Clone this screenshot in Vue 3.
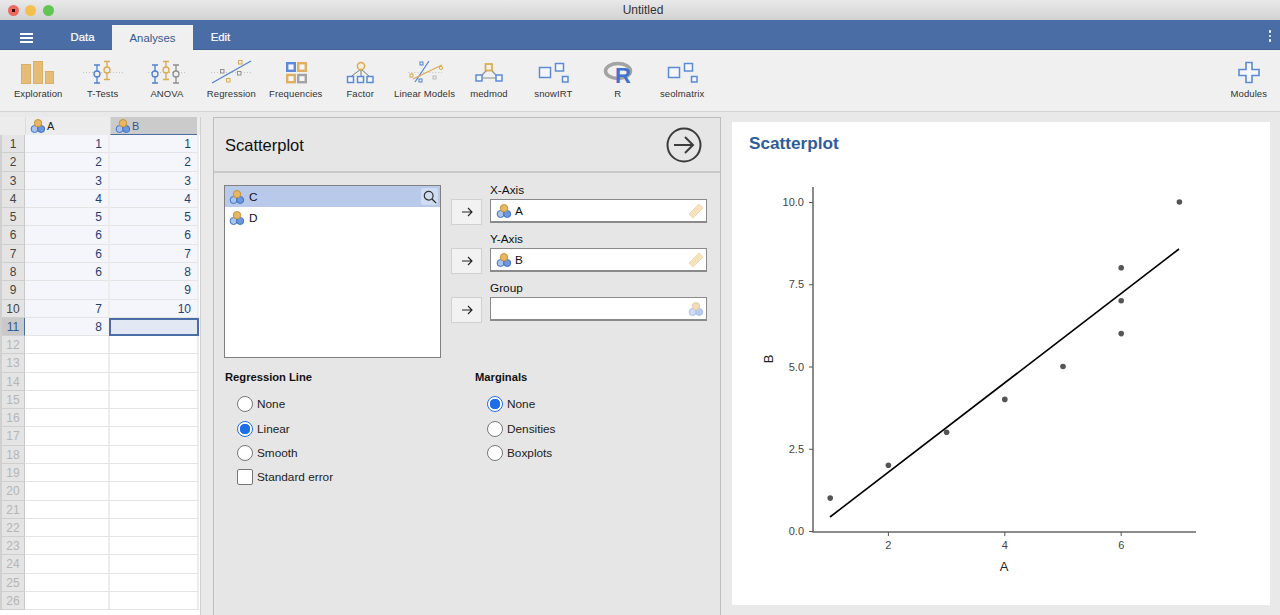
<script setup>
const tools = [
  { label: 'Exploration', icon: 'explore' },
  { label: 'T-Tests', icon: 'ttest' },
  { label: 'ANOVA', icon: 'anova' },
  { label: 'Regression', icon: 'regress' },
  { label: 'Frequencies', icon: 'freq' },
  { label: 'Factor', icon: 'factor' },
  { label: 'Linear Models', icon: 'linear' },
  { label: 'medmod', icon: 'medmod' },
  { label: 'snowIRT', icon: 'boxes' },
  { label: 'R', icon: 'r' },
  { label: 'seolmatrix', icon: 'boxes' },
]

const colA = [1, 2, 3, 4, 5, 6, 6, 6, '', 7, 8]
const colB = [1, 2, 3, 4, 5, 6, 7, 8, 9, 10, '']
// rows are 18.28px apart in the shot, rounded here so the grid lines stay crisp
const ROW = 18.28
const rows = Array.from({ length: 26 }, (_, i) => ({
  n: i + 1,
  a: colA[i] ?? '',
  b: colB[i] ?? '',
  filled: i < 11,
  h: Math.round(ROW * (i + 1)) - Math.round(ROW * i),
}))

const targets = [
  { label: 'X-Axis', name: 'A', icon: 'ruler' },
  { label: 'Y-Axis', name: 'B', icon: 'ruler' },
  { label: 'Group', name: '', icon: 'nominal-faint' },
]

const regression = [
  { label: 'None', on: false },
  { label: 'Linear', on: true },
  { label: 'Smooth', on: false },
]
const marginals = [
  { label: 'None', on: true },
  { label: 'Densities', on: false },
  { label: 'Boxplots', on: false },
]

// plot scales, read off the axis ticks
const px = (v) => 40 + 58.2 * v
const py = (v) => 354 - 32.9 * v
const points = [[1, 1], [2, 2], [3, 3], [4, 4], [5, 5], [6, 6], [6, 7], [6, 8], [7, 10]]
const yTicks = ['0.0', '2.5', '5.0', '7.5', '10.0']
const xTicks = [2, 4, 6]
</script>

<template>
  <div class="app">
    <svg class="defs" width="0" height="0">
      <symbol id="i-nominal" viewBox="0 0 16 16">
        <circle cx="4.6" cy="11" r="3.5" fill="#a9c3ec" stroke="#3f73c4" />
        <circle cx="11.2" cy="11" r="3.5" fill="#6c97dc" stroke="#3f73c4" />
        <circle cx="8" cy="5.2" r="3.7" fill="#e8b766" stroke="#c79336" />
      </symbol>
      <symbol id="i-nominal-faint" viewBox="0 0 16 16">
        <circle cx="4.6" cy="11" r="3.5" fill="#cfdcf3" stroke="#a9c3ec" />
        <circle cx="11.2" cy="11" r="3.5" fill="#b7cbee" stroke="#a9c3ec" />
        <circle cx="8" cy="5.2" r="3.7" fill="#f0dcb8" stroke="#e3cfa6" />
      </symbol>
      <symbol id="i-ruler" viewBox="0 0 16 16">
        <path d="M1 11 11 1l4 4L5 15z" fill="#f6e3bf" stroke="#f0d9ab" />
        <path d="M4.500 9.500l1 1M6.500 7.500l1 1M8.500 5.500l1 1" stroke="#ecd3a2" fill="none" />
      </symbol>

      <symbol id="t-explore" viewBox="0 0 60 30">
        <g fill="#e6bd78" stroke="#dcb064">
          <rect x="13.500" y="7.500" width="9" height="19" />
          <rect x="25.500" y="4.500" width="9" height="22" />
          <rect x="37.500" y="14.500" width="8" height="12" />
        </g>
      </symbol>
      <symbol id="t-ttest" viewBox="0 0 60 30">
        <path d="M10 15.500H50" stroke="#c4c4c4" stroke-dasharray="1 2" />
        <g fill="none" stroke="#4f80cf" stroke-width="1.300">
          <path d="M21 8h6M24 8v18M21 26h6" /><circle cx="24" cy="17" r="3" fill="#f0f0f0" />
        </g>
        <g fill="none" stroke="#dba94f" stroke-width="1.300">
          <path d="M31 4.500h6M34 4.500v18M31 22.500h6" /><circle cx="34" cy="13" r="3" fill="#f0f0f0" />
        </g>
      </symbol>
      <symbol id="t-anova" viewBox="0 0 60 30">
        <path d="M11 15.500H49" stroke="#c4c4c4" stroke-dasharray="1 2" />
        <g fill="none" stroke="#4f80cf" stroke-width="1.300">
          <path d="M15 8h6M18 8v18M15 26h6" /><circle cx="18" cy="17" r="3" fill="#f0f0f0" />
        </g>
        <g fill="none" stroke="#dba94f" stroke-width="1.300">
          <path d="M26 4.500h6M29 4.500v18M26 22.500h6" /><circle cx="29" cy="13" r="3" fill="#f0f0f0" />
        </g>
        <g fill="none" stroke="#8f8f8f" stroke-width="1.300">
          <path d="M36 8h6M39 8v18M36 26h6" /><circle cx="39" cy="17" r="3" fill="#f0f0f0" />
        </g>
      </symbol>
      <symbol id="t-regress" viewBox="0 0 60 30">
        <path d="M10 15.500H50" stroke="#c4c4c4" stroke-dasharray="1 2" />
        <path d="M11 26 50 4" stroke="#4f80cf" stroke-width="1.200" />
        <g fill="#f0f0f0" stroke-width="1">
          <rect x="19.500" y="12.500" width="3.500" height="3.500" stroke="#8f8f8f" />
          <rect x="37.500" y="3.500" width="3.500" height="3.500" stroke="#dba94f" />
          <rect x="36.500" y="14.500" width="3.500" height="3.500" stroke="#8f8f8f" />
          <rect x="25.500" y="21.500" width="3.500" height="3.500" stroke="#dba94f" />
        </g>
      </symbol>
      <symbol id="t-freq" viewBox="0 0 60 30">
        <g fill="#f4f6fb" stroke-width="2.400">
          <rect x="21.200" y="6.200" width="7.600" height="7.600" stroke="#5b8bd8" />
          <rect x="32.200" y="6.200" width="7.600" height="7.600" stroke="#e0b060" />
          <rect x="21.200" y="18" width="7.600" height="7.200" stroke="#e0b060" />
          <rect x="32.200" y="18" width="7.600" height="7.200" stroke="#a3a3a3" />
        </g>
      </symbol>
      <symbol id="t-factor" viewBox="0 0 60 30">
        <path d="M31 12 20.500 20M31 12v8M31 12 40 20" stroke="#777" fill="none" />
        <circle cx="31" cy="9" r="3.600" fill="#f5efe0" stroke="#dba94f" stroke-width="1.500" />
        <g fill="#f4f6fb" stroke="#5b8bd8" stroke-width="1.500">
          <rect x="17.500" y="19.500" width="6" height="6" />
          <rect x="27.500" y="19.500" width="6" height="6" />
          <rect x="37" y="19.500" width="6" height="6" />
        </g>
      </symbol>
      <symbol id="t-linear" viewBox="0 0 60 30">
        <path d="M13 15.500H47" stroke="#d0d0d0" stroke-dasharray="1.500 1.500" />
        <path d="M20 25 34 4" stroke="#4f80cf" stroke-width="1.200" />
        <path d="M18 22 47 8" stroke="#dba94f" stroke-width="1.200" />
        <g fill="none" stroke-width="1">
          <rect x="25" y="5" width="3" height="3" stroke="#4f80cf" />
          <rect x="24" y="22" width="3" height="3" stroke="#4f80cf" />
          <rect x="15" y="17" width="3" height="3" stroke="#dba94f" />
          <circle cx="46" cy="11" r="1.600" stroke="#dba94f" />
          <rect x="38" y="19" width="3" height="3" stroke="#bbb" />
        </g>
      </symbol>
      <symbol id="t-medmod" viewBox="0 0 60 30">
        <path d="M30 11 20 21M30 11 40 21M20 21H40" stroke="#8f8f8f" stroke-width="1.200" fill="none" />
        <rect x="26.500" y="7" width="6.500" height="6.500" fill="#f5efe0" stroke="#dba94f" stroke-width="1.700" />
        <g fill="#f4f6fb" stroke="#5b8bd8" stroke-width="1.500">
          <rect x="17" y="18" width="6" height="6" />
          <rect x="37" y="18" width="6" height="6" />
        </g>
      </symbol>
      <symbol id="t-boxes" viewBox="0 0 60 30">
        <g fill="#f4f6fb" stroke="#5b8bd8" stroke-width="1.500">
          <rect x="16.500" y="10.500" width="11" height="10" />
          <rect x="32.500" y="6.500" width="8" height="7.500" />
          <rect x="39.500" y="19.500" width="5.500" height="5.500" />
        </g>
      </symbol>
      <symbol id="t-plus" viewBox="0 0 60 30">
        <path d="M27 5.500h6v7h7v6h-7v7h-6v-7h-7v-6h7z" fill="#f4f6fb" stroke="#5b8bd8" stroke-width="1.600" />
      </symbol>
    </svg>

    <header class="titlebar">
      <div class="lights">
        <span class="light red"></span>
        <span class="light yellow"></span>
        <span class="light green"></span>
      </div>
      <span class="title">Untitled</span>
    </header>

    <nav class="tabbar">
      <div class="burger"><i></i><i></i><i></i></div>
      <span class="tab tab-data">Data</span>
      <span class="tab tab-active">Analyses</span>
      <span class="tab tab-edit">Edit</span>
      <div class="kebab"><i></i><i></i><i></i></div>
    </nav>

    <section class="toolbar">
      <div v-for="t in tools" :key="t.label" class="tool">
        <svg v-if="t.icon === 'r'" class="tool-icon" viewBox="0 0 60 30">
          <ellipse cx="30" cy="14" rx="12.500" ry="7.500" fill="none" stroke="#a3a3a3" stroke-width="3.500" />
          <text x="27" y="26" class="r-glyph">R</text>
        </svg>
        <svg v-else class="tool-icon"><use :href="'#t-' + t.icon" /></svg>
        <span>{{ t.label }}</span>
      </div>
      <div class="tool tool-modules">
        <svg class="tool-icon"><use href="#t-plus" /></svg>
        <span>Modules</span>
      </div>
    </section>

    <main class="workspace">
      <section class="sheet">
        <div class="sheet-row sheet-head">
          <div class="corner"></div>
          <div class="col-head">
            <svg class="var"><use href="#i-nominal" /></svg>A
          </div>
          <div class="col-head col-head-on">
            <svg class="var"><use href="#i-nominal" /></svg>B
          </div>
        </div>
        <div v-for="r in rows" :key="r.n" class="sheet-row" :style="{ height: r.h + 'px' }">
          <div class="row-num" :class="{ dim: !r.filled, on: r.n === 11 }">{{ r.n }}</div>
          <div class="cell" :class="{ filled: r.filled }">{{ r.a }}</div>
          <div class="cell" :class="{ filled: r.filled, current: r.n === 11 }">{{ r.b }}</div>
        </div>
      </section>

      <section class="options">
        <div class="opt-head">
          <h2>Scatterplot</h2>
          <svg class="run" width="38" height="38" viewBox="0 0 38 38">
            <circle cx="19" cy="19" r="16.500" fill="none" stroke="#3c3c3c" stroke-width="2" />
            <path d="M9 19H28M20 11l8 8-8 8" fill="none" stroke="#3c3c3c" stroke-width="2" />
          </svg>
        </div>

        <div class="assign">
          <div class="source">
            <div class="source-item selected">
              <svg class="var"><use href="#i-nominal" /></svg>C
              <span class="search">
                <svg width="14" height="14" viewBox="0 0 16 16">
                  <circle cx="6.500" cy="6.500" r="5" fill="none" stroke="#333" stroke-width="1.400" />
                  <path d="M10 10l5 5" stroke="#333" stroke-width="1.600" />
                </svg>
              </span>
            </div>
            <div class="source-item">
              <svg class="var"><use href="#i-nominal" /></svg>D
            </div>
          </div>

          <div class="targets">
            <div v-for="t in targets" :key="t.label" class="target">
              <button class="move">
                <svg width="12" height="10" viewBox="0 0 12 10">
                  <path d="M1 5H11M7 1l4 4-4 4" fill="none" stroke="#222" stroke-width="1.100" />
                </svg>
              </button>
              <div class="target-body">
                <label>{{ t.label }}</label>
                <div class="field">
                  <svg v-if="t.name" class="var"><use href="#i-nominal" /></svg>{{ t.name }}
                  <svg class="field-icon"><use :href="'#i-' + t.icon" /></svg>
                </div>
              </div>
            </div>
          </div>
        </div>

        <div class="groups">
          <div class="group">
            <h3>Regression Line</h3>
            <div v-for="o in regression" :key="o.label" class="choice">
              <span class="radio" :class="{ on: o.on }"></span>{{ o.label }}
            </div>
            <div class="choice">
              <span class="check"></span>Standard error
            </div>
          </div>
          <div class="group">
            <h3>Marginals</h3>
            <div v-for="o in marginals" :key="o.label" class="choice">
              <span class="radio" :class="{ on: o.on }"></span>{{ o.label }}
            </div>
          </div>
        </div>
      </section>

      <section class="results">
        <h1>Scatterplot</h1>
        <svg class="plot" width="538" height="405" viewBox="0 0 538 405">
          <path d="M81 10V355H464" fill="none" stroke="#666" stroke-width="1.500" />
          <g v-for="t in yTicks" :key="t">
            <path :d="`M77 ${py(+t) + 0.5}H81`" stroke="#555" />
            <text class="tick" x="72" :y="py(+t) + 4" text-anchor="end">{{ t }}</text>
          </g>
          <g v-for="t in xTicks" :key="t">
            <path :d="`M${px(t)} 355v4`" stroke="#555" />
            <text class="tick" :x="px(t)" y="372" text-anchor="middle">{{ t }}</text>
          </g>
          <circle v-for="(p, i) in points" :key="i" :cx="px(p[0])" :cy="py(p[1])" r="2.800" fill="#555" />
          <path d="M98 340 447 72" stroke="#000" stroke-width="1.600" />
          <text class="axis" x="272" y="394" text-anchor="middle">A</text>
          <text class="axis" x="41" y="182" text-anchor="middle" transform="rotate(-90 41 182)">B</text>
        </svg>
      </section>
    </main>
  </div>
</template>

<style scoped>
.app {
  width: 1280px;
  height: 615px;
  overflow: hidden;
  display: flex;
  flex-direction: column;
  background: #e9e9e9;
  font-family: "Liberation Sans", Arial, sans-serif;
  color: #111;
}
.defs {
  position: absolute;
}
.r-glyph {
  font: bold 22px "Liberation Sans", sans-serif;
  fill: #3f73d0;
}

.titlebar {
  height: 20px;
  flex: none;
  display: flex;
  align-items: center;
  justify-content: center;
  background: linear-gradient(#e9e9e9, #d2d2d2);
  position: relative;
}
.title {
  font-size: 12px;
  color: #333;
  margin-left: 6px;
}
.lights {
  position: absolute;
  left: 7.500px;
  top: 5px;
  display: flex;
  gap: 6.500px;
}
.light {
  width: 11px;
  height: 11px;
  border-radius: 50%;
}
.red { background: radial-gradient(circle, #3a0d0b 0 1.500px, #ec6a5e 2px); }
.yellow { background: #f5bf4f; }
.green { background: #61c554; }

.tabbar {
  height: 30px;
  flex: none;
  display: flex;
  align-items: stretch;
  background: #4a6da5;
  border-bottom: 1px solid #3f6197;
  box-sizing: border-box;
  color: #fff;
  font-size: 11.300px;
  -webkit-text-stroke: 0.2px #fff;
}
.burger {
  width: 13px;
  margin: 13px 0 0 20px;
  display: flex;
  flex-direction: column;
  gap: 2.500px;
}
.burger i {
  display: block;
  height: 1.500px;
  background: #fff;
}
.tab {
  display: flex;
  align-items: center;
  justify-content: center;
  height: 30px;
  padding-top: 4px;
  box-sizing: border-box;
}
.tab-data {
  width: 79px;
  padding-left: 20px;
}
.tab-active {
  width: 81px;
  margin-top: 5px;
  height: 25px;
  padding-top: 0;
  background: #f0f0f0;
  color: #34598f;
  -webkit-text-stroke: 0;
}
.tab-edit { width: 55px; }
.kebab {
  margin: 10px 9px 0 auto;
  display: flex;
  flex-direction: column;
  gap: 2px;
}
.kebab i {
  display: block;
  width: 2.500px;
  height: 2.500px;
  border-radius: 50%;
  background: #fff;
}

.toolbar {
  height: 62px;
  flex: none;
  box-sizing: border-box;
  display: flex;
  padding-left: 6px;
  background: #f0f0f0;
  border-bottom: 1px solid #d4d4d4;
}
.tool {
  width: 64.400px;
  display: flex;
  flex-direction: column;
  align-items: center;
  padding-top: 7px;
  font-size: 9.500px;
  color: #333;
  white-space: nowrap;
}
.tool-icon {
  width: 60px;
  height: 30px;
}
.tool span {
  margin-top: 1px;
  letter-spacing: 0.1px;
}
.tool-modules {
  margin-left: auto;
  margin-right: -1px;
}

.workspace {
  flex: 1;
  min-height: 0;
  display: grid;
  grid-template-columns: 213px 519px 1fr;
  padding-top: 5px;
}

.sheet {
  margin-right: 12px;
  background: #fff;
  border-right: 1px solid #cfcfcf;
  overflow: hidden;
}
.sheet-row {
  display: grid;
  grid-template-columns: 25px 85px 89px;
  grid-template-rows: minmax(0, 1fr);
  font-size: 12px;
}
.sheet-head {
  height: 18px;
  background: #ececec;
  font-size: 11px;
}
.corner {
  background: #ececec;
}
.col-head {
  display: flex;
  align-items: center;
  gap: 1px;
  padding-left: 4px;
  color: #222;
  border-left: 1px solid #dcdcdc;
}
.col-head-on {
  background: #cbcbcb;
  border-bottom: 1px solid #4a6da5;
  color: #34598f;
  box-sizing: border-box;
  margin-right: 2px;
}
.var {
  width: 16px;
  height: 16px;
  flex: none;
}
.row-num {
  background: #e4e4e4;
  border-bottom: 1px solid #cfcfcf;
  border-left: 2px solid #d0d0d0;
  border-right: 1px solid #c9c9c9;
  color: #444;
  font-size: 12px;
  text-align: center;
  line-height: 18px;
  box-sizing: border-box;
}
.row-num.dim {
  color: #b5b5b5;
}
.row-num.on {
  background: #c9c9c9;
  color: #34598f;
  border-right: 1px solid #4a6da5;
}
.cell {
  text-align: right;
  padding-right: 6px;
  line-height: 18px;
  color: #1e3f78;
  border-bottom: 1px solid #e4e4e4;
  border-right: 2px solid #ededed;
  box-sizing: border-box;
}
.cell.filled {
  background: #f4f6fb;
}
.cell.current {
  background: #e2e9f4;
  border: 2px solid #4a6da5;
  margin-left: -1px;
}

.options {
  margin-right: 11px;
  background: #e6e6e6;
  border: 1px solid #bdbdbd;
  border-bottom: 0;
  box-sizing: border-box;
  padding: 0 13px 0 10px;
  font-size: 11.800px;
}
.opt-head {
  height: 52px;
  margin: 0 -13px 0 -10px;
  padding: 1px 17px 0 11px;
  box-sizing: content-box;
  display: flex;
  align-items: center;
  justify-content: space-between;
  border-bottom: 2px solid #c9c9c9;
}
.opt-head h2 {
  margin: 0;
  font-size: 16.500px;
  font-weight: 400;
  color: #111;
}
.assign {
  display: flex;
  margin-top: 12px;
}
.source {
  width: 217px;
  height: 173px;
  box-sizing: border-box;
  flex: none;
  background: #fff;
  border: 1px solid #808080;
}
.source-item {
  height: 21px;
  display: flex;
  align-items: center;
  gap: 4px;
  padding-left: 4px;
  position: relative;
}
.source-item.selected {
  background: #b8c9ea;
}
.search {
  position: absolute;
  right: 2px;
  top: 2px;
  width: 17px;
  height: 17px;
  background: #cfdcf1;
  display: flex;
  align-items: center;
  justify-content: center;
  border-radius: 2px;
}
.targets {
  margin-left: 10px;
  display: flex;
  flex-direction: column;
  gap: 8px;
  margin-top: -3px;
}
.target {
  display: flex;
  align-items: flex-end;
  gap: 8px;
}
.move {
  width: 31px;
  height: 26px;
  padding: 0;
  display: flex;
  align-items: center;
  justify-content: center;
  background: #f2f2f2;
  border: 1px solid #d0d0d0;
  margin-bottom: -2px;
}
.target-body label {
  display: block;
  height: 17px;
  line-height: 17px;
}
.field {
  width: 217px;
  height: 24px;
  box-sizing: border-box;
  background: #fff;
  border: 1px solid #8a8a8a;
  border-bottom-width: 2px;
  display: flex;
  align-items: center;
  gap: 3px;
  padding-left: 5px;
  position: relative;
}
.field-icon {
  position: absolute;
  right: 2px;
  top: 3px;
  width: 16px;
  height: 16px;
}
.groups {
  display: flex;
  margin-top: 12px;
}
.group {
  width: 250px;
  flex: none;
}
.group h3 {
  margin: 0 0 8px 1px;
  font-size: 11.200px;
  line-height: 14px;
  font-weight: 700;
  color: #111;
}
.choice {
  height: 24.400px;
  display: flex;
  align-items: center;
  gap: 4px;
  margin-left: 13px;
  color: #222;
}
.radio,
.check {
  width: 16px;
  height: 16px;
  box-sizing: border-box;
  background: #fff;
  border: 1px solid #777;
  flex: none;
}
.radio {
  border-radius: 50%;
}
.radio.on {
  border: 1.500px solid #1e6fe6;
  background: radial-gradient(circle, #1e6fe6 0 5px, #fff 5.500px);
}
.check {
  border-radius: 2px;
}

.results {
  background: #fff;
  margin: 5px 10px 10px 0;
  overflow: hidden;
}
.results h1 {
  margin: 11px 0 0 17px;
  font-size: 17.200px;
  line-height: 20px;
  color: #2f5c9c;
}
.plot {
  display: block;
  margin-top: 24px;
}
.tick {
  font: 11px "Liberation Sans", sans-serif;
  fill: #444;
}
.axis {
  font: 13px "Liberation Sans", sans-serif;
  fill: #222;
}
</style>

<style>
html, body {
  margin: 0;
  overflow: hidden;
}
</style>
